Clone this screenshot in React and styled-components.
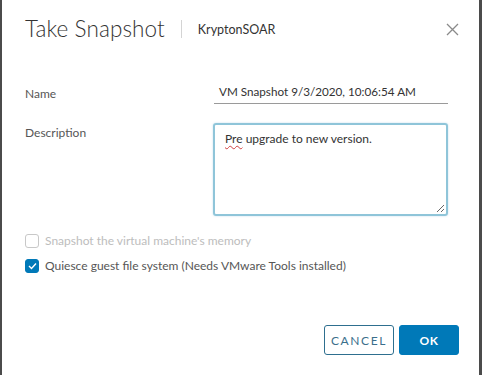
import React from "react";
import styled, { createGlobalStyle } from "styled-components";

const GlobalStyle = createGlobalStyle`
  html, body {
    margin: 0;
    padding: 0;
    background: #4b4b4b;
    overflow: hidden;
  }
  body {
    font-family: "Lato", "Open Sans", sans-serif;
  }
`;

const Page = styled.div`
  width: 482px;
  height: 375px;
  padding: 0 3px 0 2px;
  box-sizing: border-box;
  overflow: hidden;
`;

const Modal = styled.div`
  background: #fff;
  height: 390px;
  padding: 0 20px 0 23px;
  box-sizing: border-box;
  display: flex;
  flex-direction: column;
`;

const Header = styled.div`
  display: flex;
  align-items: center;
  height: 24px;
  margin-top: 17px;
`;

const Title = styled.h3`
  margin: 0;
  font-size: 22.5px;
  font-weight: 300;
  color: #333;
  line-height: 24px;
  letter-spacing: 0.1px;
`;

const Divider = styled.span`
  width: 1px;
  height: 18px;
  background: #d4d4d4;
  margin: 0 16px 0 16px;
`;

const Subtitle = styled.span`
  font-size: 12.5px;
  color: #333;
  flex: 1;
`;

const CloseButton = styled.button`
  border: none;
  background: none;
  padding: 0;
  width: 14px;
  height: 14px;
  display: flex;
  align-items: center;
  justify-content: center;
  cursor: pointer;
`;

const Form = styled.div`
  margin-top: 39px;
  padding-right: 11px;
  display: flex;
  flex-direction: column;
`;

const Row = styled.div`
  display: flex;
  align-items: ${(p) => (p.top ? "flex-start" : "flex-end")};
  margin-bottom: ${(p) => p.gap || 0}px;
`;

const Label = styled.label`
  width: 189px;
  font-size: 12px;
  color: #565656;
  padding-top: ${(p) => p.offset || 0}px;
  padding-bottom: ${(p) => p.bottom || 0}px;
`;

const TextInput = styled.div`
  flex: 1;
  height: 23px;
  border-bottom: 1px solid #9a9a9a;
  padding-left: 5px;
  font-size: 11.7px;
  color: #333;
  line-height: 22px;
`;

const TextArea = styled.div`
  position: relative;
  flex: 1;
  height: 79px;
  border: 2px solid #8fc5d9;
  border-radius: 3px;
  box-shadow: 0 0 2px rgba(0, 121, 184, 0.25);
  padding: 5px 10px;
  box-sizing: content-box;
  font-size: 12px;
  color: #333;
  line-height: 18px;
  margin-left: -1px;
`;

const Misspelled = styled.span`
  text-decoration: underline wavy #d04040;
  text-decoration-thickness: 1px;
  text-underline-offset: 2px;
`;

const Grip = styled.svg`
  position: absolute;
  right: 1px;
  bottom: 1px;
`;

const Checks = styled.div`
  margin-top: 17px;
  display: flex;
  flex-direction: column;
  gap: 10px;
`;

const CheckRow = styled.div`
  display: flex;
  align-items: center;
  gap: 6px;
  font-size: 12px;
  color: ${(p) => (p.disabled ? "#bdbdbd" : "#565656")};
`;

const Box = styled.span`
  width: 12px;
  height: 12px;
  border-radius: 3px;
  border: 1px solid ${(p) => (p.checked ? "#0079b8" : "#c8c8c8")};
  background: ${(p) => (p.checked ? "#0079b8" : "#fff")};
  display: flex;
  align-items: center;
  justify-content: center;
`;

const Footer = styled.div`
  display: flex;
  justify-content: flex-end;
  gap: 5px;
  margin-top: 52px;
`;

const Button = styled.button`
  height: 30px;
  padding: 0;
  width: ${(p) => p.w}px;
  border-radius: 3px;
  font-family: "Lato", "Open Sans", sans-serif;
  font-size: 12px;
  letter-spacing: ${(p) => (p.primary ? "0.5px" : "1.6px")};
  font-weight: ${(p) => (p.primary ? 700 : 400)};
  border: 1px solid ${(p) => (p.primary ? "#0079b8" : "#2e6f8f")};
  background: ${(p) => (p.primary ? "#0079b8" : "#fff")};
  color: ${(p) => (p.primary ? "#fff" : "#3b6f8c")};
  cursor: pointer;
`;

export default function App() {
  return (
    <Page>
      <GlobalStyle />
      <Modal>
        <Header>
          <Title>Take Snapshot</Title>
          <Divider />
          <Subtitle>KryptonSOAR</Subtitle>
          <CloseButton aria-label="Close">
            <svg width="13" height="13" viewBox="0 0 13 13">
              <path d="M1 1L12 12M12 1L1 12" stroke="#8a8a8a" strokeWidth="1.3" />
            </svg>
          </CloseButton>
        </Header>

        <Form>
          <Row gap={19}>
            <Label bottom={3}>Name</Label>
            <TextInput>VM Snapshot 9/3/2020, 10:06:54 AM</TextInput>
          </Row>
          <Row top>
            <Label offset={2}>Description</Label>
            <TextArea>
              <Misspelled>Pre</Misspelled> upgrade to new version.
              <Grip width="10" height="10" viewBox="0 0 10 10">
                <path d="M9 2L2 9M9 6L6 9" stroke="#666" strokeWidth="1" />
              </Grip>
            </TextArea>
          </Row>
        </Form>

        <Checks>
          <CheckRow disabled>
            <Box />
            Snapshot the virtual machine's memory
          </CheckRow>
          <CheckRow>
            <Box checked>
              <svg width="9" height="8" viewBox="0 0 9 8">
                <path d="M1 4L3.5 6.5L8 1.5" stroke="#fff" strokeWidth="1.4" fill="none" />
              </svg>
            </Box>
            Quiesce guest file system (Needs VMware Tools installed)
          </CheckRow>
        </Checks>

        <Footer>
          <Button w={70}>CANCEL</Button>
          <Button w={60} primary>OK</Button>
        </Footer>
      </Modal>
    </Page>
  );
}
